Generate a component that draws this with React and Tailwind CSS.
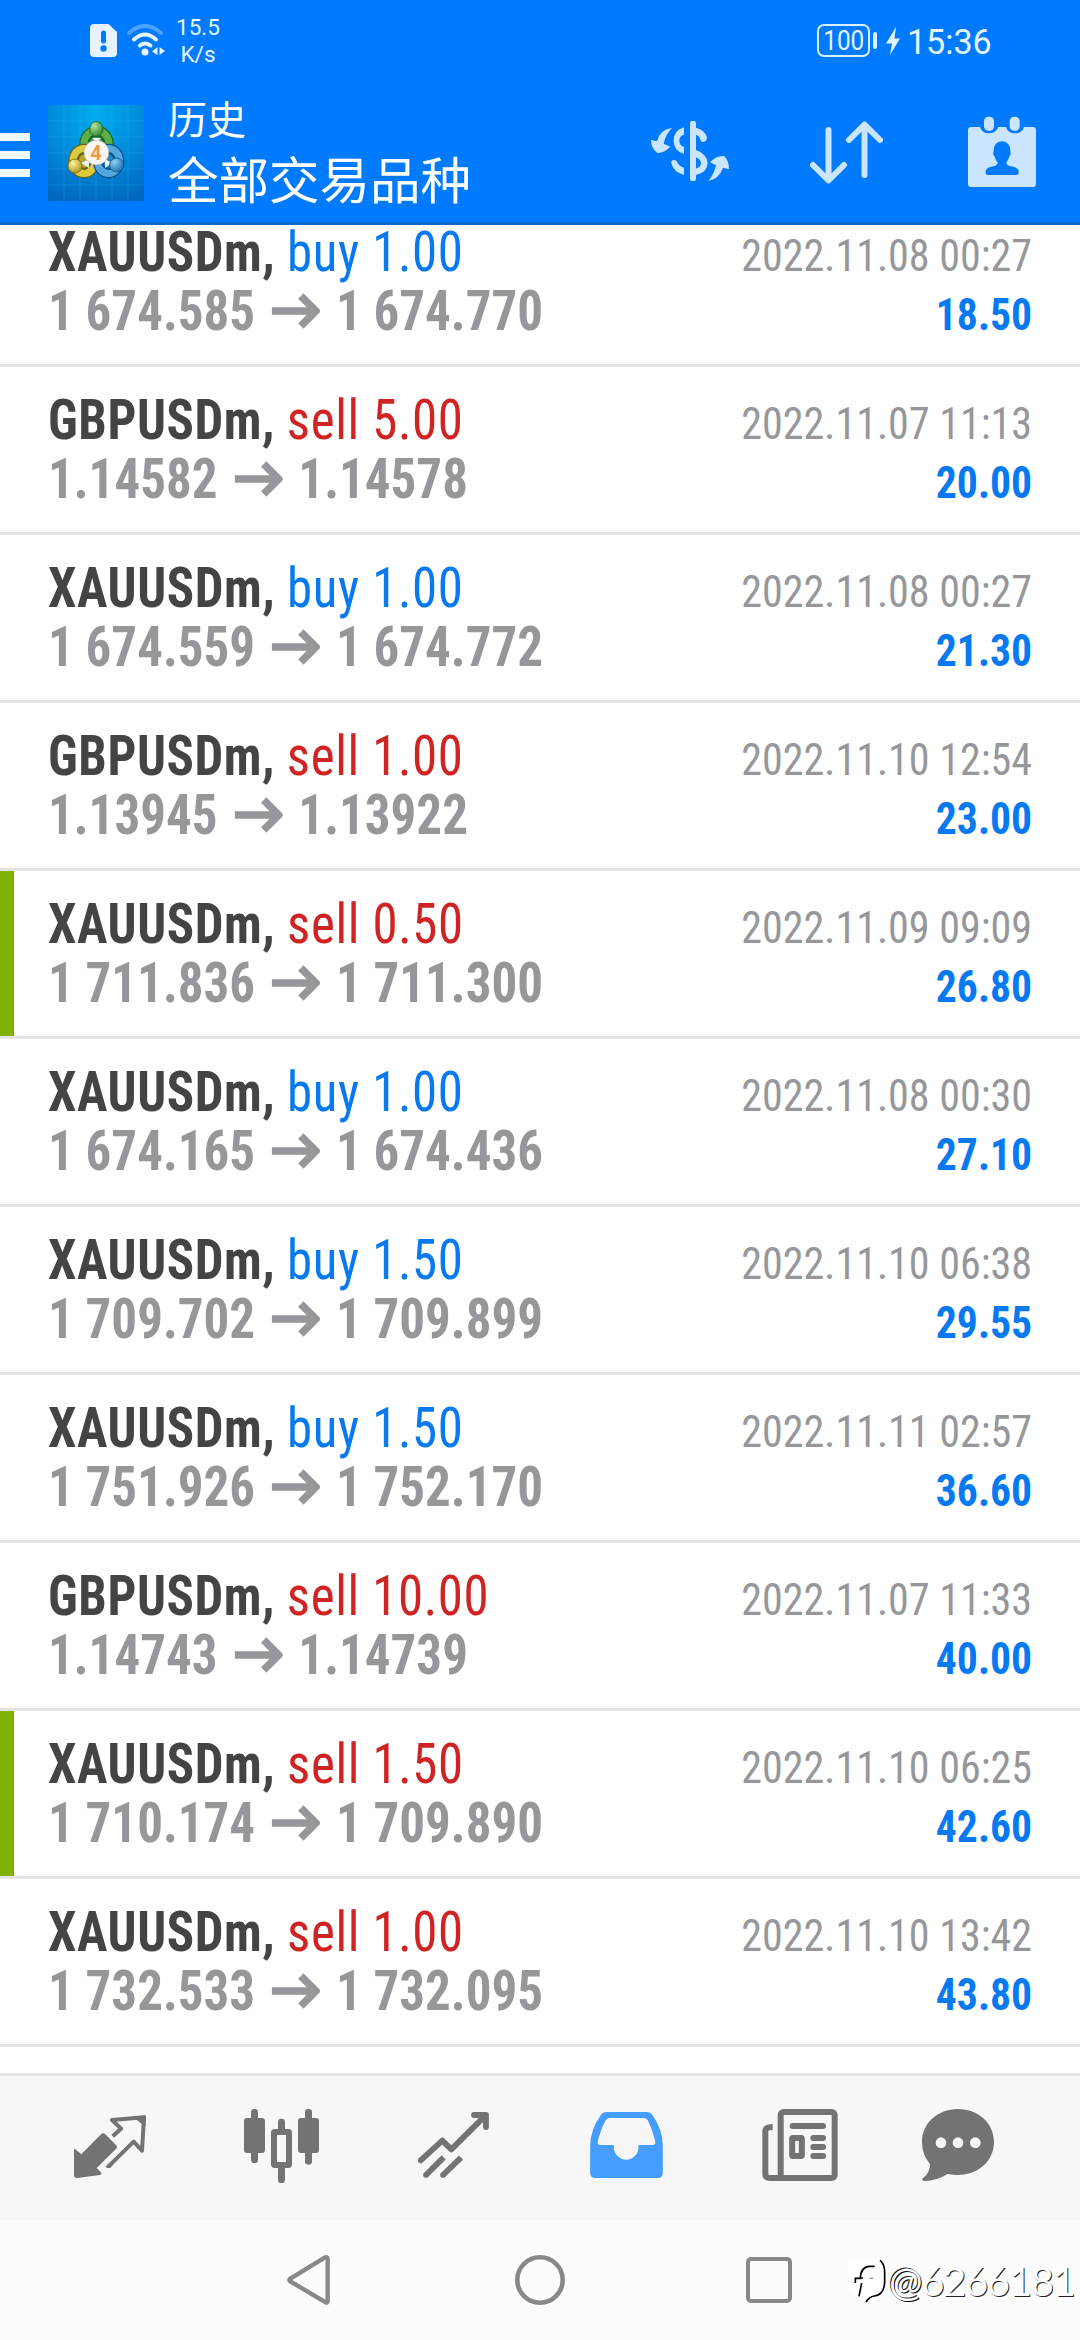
const trades = [
  { symbol: 'XAUUSDm', side: 'buy', volume: '1.00', open: '1 674.585', close: '1 674.770', time: '2022.11.08 00:27', profit: '18.50' },
  { symbol: 'GBPUSDm', side: 'sell', volume: '5.00', open: '1.14582', close: '1.14578', time: '2022.11.07 11:13', profit: '20.00' },
  { symbol: 'XAUUSDm', side: 'buy', volume: '1.00', open: '1 674.559', close: '1 674.772', time: '2022.11.08 00:27', profit: '21.30' },
  { symbol: 'GBPUSDm', side: 'sell', volume: '1.00', open: '1.13945', close: '1.13922', time: '2022.11.10 12:54', profit: '23.00' },
  { symbol: 'XAUUSDm', side: 'sell', volume: '0.50', open: '1 711.836', close: '1 711.300', time: '2022.11.09 09:09', profit: '26.80', marked: true },
  { symbol: 'XAUUSDm', side: 'buy', volume: '1.00', open: '1 674.165', close: '1 674.436', time: '2022.11.08 00:30', profit: '27.10' },
  { symbol: 'XAUUSDm', side: 'buy', volume: '1.50', open: '1 709.702', close: '1 709.899', time: '2022.11.10 06:38', profit: '29.55' },
  { symbol: 'XAUUSDm', side: 'buy', volume: '1.50', open: '1 751.926', close: '1 752.170', time: '2022.11.11 02:57', profit: '36.60' },
  { symbol: 'GBPUSDm', side: 'sell', volume: '10.00', open: '1.14743', close: '1.14739', time: '2022.11.07 11:33', profit: '40.00' },
  { symbol: 'XAUUSDm', side: 'sell', volume: '1.50', open: '1 710.174', close: '1 709.890', time: '2022.11.10 06:25', profit: '42.60', marked: true },
  { symbol: 'XAUUSDm', side: 'sell', volume: '1.00', open: '1 732.533', close: '1 732.095', time: '2022.11.10 13:42', profit: '43.80' },
];

function TradeRow({ trade }) {
  return (
    <div className="flex h-[168px] shrink-0 border-b-[3px] border-[#e4e4e4] [font-stretch:75%]">
      <div className={trade.marked ? 'w-[14px] bg-[#80b000]' : 'w-[14px]'} />
      <div className="flex flex-1 justify-between pt-[28px] pr-[48px] pl-[34px] whitespace-nowrap">
        <div className="w-[560px]">
          <div className="h-[59px] origin-left scale-x-[0.925] text-[55px] leading-[50px] font-bold text-[#444444]">
            <span className="tracking-[0.6px]">{trade.symbol},</span>{' '}
            <span
              className={
                trade.side === 'buy'
                  ? 'font-normal tracking-[0.7px] text-[#077af2]'
                  : 'font-normal tracking-[0.7px] text-[#d02424]'
              }
            >
              {trade.side} {trade.volume}
            </span>
          </div>
          <div className="h-[59px] origin-left scale-x-[0.928] text-[55px] leading-[50px] font-bold text-[#96979b]">
            {trade.open}
            <svg className="mr-[17px] ml-[18px] inline-block h-[36px] w-[52px] align-[1px]" viewBox="0 0 48 36" preserveAspectRatio="none">
              <path d="M0 18H43M29 3L44 18L29 33" fill="none" stroke="#96979b" strokeWidth="7.5" />
            </svg>
            {trade.close}
          </div>
        </div>
        <div className="flex flex-col items-end">
          <div className="h-[59px] origin-right scale-x-[0.935] pt-[4px] text-[45px] leading-[50px] text-[#96979b]">{trade.time}</div>
          <div className="h-[59px] origin-right scale-x-[0.925] pt-[4px] text-[45px] leading-[50px] font-bold text-[#077af2]">{trade.profit}</div>
        </div>
      </div>
    </div>
  );
}

function AppLogo() {
  return (
    <svg className="ml-[18px] h-[96px] w-[96px]" viewBox="0 0 96 96">
      <defs>
        <radialGradient id="sky" cx="0.5" cy="0.1" r="0.95">
          <stop offset="0" stopColor="#00adee" />
          <stop offset="0.5" stopColor="#008bdc" />
          <stop offset="1" stopColor="#0068be" />
        </radialGradient>
        <radialGradient id="green" cx="0.35" cy="0.3" r="0.8">
          <stop offset="0" stopColor="#b9e3a0" />
          <stop offset="1" stopColor="#1f7d24" />
        </radialGradient>
        <radialGradient id="gold" cx="0.35" cy="0.3" r="0.8">
          <stop offset="0" stopColor="#fff39a" />
          <stop offset="1" stopColor="#a98f12" />
        </radialGradient>
        <radialGradient id="azure" cx="0.35" cy="0.3" r="0.8">
          <stop offset="0" stopColor="#8fd2f5" />
          <stop offset="1" stopColor="#1268ac" />
        </radialGradient>
      </defs>
      <rect width="96" height="96" fill="url(#sky)" />
      <path d="M16 0V96M32 0V96M48 0V96M64 0V96M80 0V96M0 16H96M0 32H96M0 48H96M0 64H96M0 80H96" stroke="#3fb2ee" strokeWidth="0.8" opacity="0.35" />
      <ellipse cx="48.500" cy="39" rx="12" ry="13" fill="#3f9440" stroke="#17642c" strokeWidth="10.500" />
      <ellipse cx="48.500" cy="39" rx="12.500" ry="13.500" fill="none" stroke="#5cae4b" strokeWidth="7" />
      <ellipse cx="36" cy="56" rx="10.500" ry="12" fill="#b7a528" stroke="#6a6414" strokeWidth="10.500" />
      <ellipse cx="36" cy="56" rx="11" ry="12.500" fill="none" stroke="#ddca3f" strokeWidth="7" />
      <ellipse cx="60.500" cy="56" rx="10.500" ry="12" fill="#2b86c4" stroke="#0c4f8c" strokeWidth="10.500" />
      <ellipse cx="60.500" cy="56" rx="11" ry="12.500" fill="none" stroke="#50a9de" strokeWidth="7" />
      <path d="M33 58l8-4v9zM64 58l-7-4v9zM44 33h9l-4 5z" fill="#eef6f8" />
      <ellipse cx="48.300" cy="24" rx="6.700" ry="7.500" fill="url(#green)" stroke="#1b6b26" strokeWidth="0.8" />
      <ellipse cx="27" cy="61" rx="7" ry="7" fill="url(#gold)" stroke="#7a6a10" strokeWidth="0.8" />
      <ellipse cx="68.500" cy="60" rx="7" ry="7" fill="url(#azure)" stroke="#0f5594" strokeWidth="0.8" />
      <circle cx="48.400" cy="47.500" r="12.300" fill="#f8f6f3" stroke="#b9b9b0" strokeWidth="0.6" />
      <text x="48" y="55" textAnchor="middle" fontFamily="Roboto, sans-serif" fontWeight="700" fontSize="20" fill="#f19a4b">4</text>
    </svg>
  );
}

function StatusBar() {
  return (
    <div className="flex h-[82px] items-start pl-[90px] text-[#e6f5ff]">
      <svg className="mt-[24px] h-[33px] w-[27px]" viewBox="0 0 27 33">
        <path d="M4 0H18.500L27 8V29Q27 33 23 33H4Q0 33 0 29V4Q0 0 4 0Z" fill="#e6f3ff" />
        <path d="M13.500 9V17" stroke="#007aff" strokeWidth="5" strokeLinecap="round" />
        <circle cx="13.500" cy="24.500" r="3.200" fill="#007aff" />
      </svg>
      <svg className="mt-[24px] ml-[10px] h-[32px] w-[39px]" viewBox="0 0 39 32" fill="none" strokeWidth="4">
        <path d="M2 9Q18 -5 34 9" stroke="#4ca2ff" strokeLinecap="round" />
        <path d="M7 15.500Q18 5.500 29 15.500" stroke="#e6f5ff" strokeLinecap="round" />
        <path d="M13 21.500Q18 17.500 23.500 21.500" stroke="#e6f5ff" strokeLinecap="round" />
        <circle cx="18" cy="28" r="3.500" fill="#e6f5ff" />
        <path d="M30.500 23V31L25 27.500ZM32.500 23V31L38 27Z" fill="#e6f5ff" />
      </svg>
      <div className="mt-[14px] ml-[8px] w-[48px] text-center text-[22.500px] leading-[27px]">
        15.5
        <br />
        K/s
      </div>
      <div className="mt-[24px] ml-[595px] flex h-[33px] w-[53px] items-center justify-center rounded-[7px] border-[2.500px] border-[#d9f1ff]">
        <span className="scale-x-[0.9] text-[27px] leading-[28px]">100</span>
      </div>
      <div className="mt-[32px] ml-[3px] h-[17px] w-[4px] rounded-full bg-[#d9f1ff]" />
      <svg className="mt-[27px] ml-[9px] h-[28px] w-[14px]" viewBox="0 0 14 28">
        <path d="M10 0L0 16.500H6L4 28L14 11.500H8.500Z" fill="#e0f5ff" />
      </svg>
      <div className="mt-[22px] ml-[7px] origin-left scale-x-[0.985] text-[34.500px] leading-[40px]">15:36</div>
    </div>
  );
}

function Toolbar() {
  return (
    <div className="flex h-[140px] items-start">
      <div className="mt-[51px] flex w-[30px] flex-col gap-[10px]">
        <div className="h-[8px] bg-[#f0faff]" />
        <div className="h-[8px] bg-[#f0faff]" />
        <div className="h-[8px] bg-[#f0faff]" />
      </div>
      <div className="mt-[23px]">
        <AppLogo />
      </div>
      <div className="mt-[15px] ml-[24px] w-[483px] font-['Roboto','Noto_Sans_CJK_SC',sans-serif] text-white">
        <div className="text-[39px] leading-[48px]">历史</div>
        <div className="pt-[2px] text-[50.500px] leading-[70px]">全部交易品种</div>
      </div>
      <svg className="mt-[39px] h-[60px] w-[78px]" viewBox="153 363 234 180" fill="#cce5ff">
        <path d="M216 384Q180 388 171 424L153 420Q153 445 172 459Q192 459 211 440L191 431Q196 404 216 384Z" />
        <path d="M325 543Q358 536 369 503L387 508Q387 482 372 468Q350 466 330 487L348 496Q342 523 325 543Z" />
        <path d="M279 371V535" stroke="#cce5ff" strokeWidth="18" strokeLinecap="round" />
        <path d="M252 382V404Q238 407 238 422Q238 436 252 441V462Q221 452 221 422Q221 391 252 382Z" />
        <path d="M214 484Q220 477 229 482Q236 498 252 503V525Q220 516 214 490Z" />
        <path d="M288 383Q315 390 321 412Q320 426 309 426Q302 426 298 412Q294 405 286 404Z" />
        <path d="M286 449Q323 462 323 490Q322 518 286 526V506Q303 502 303 490Q303 478 286 471Z" />
      </svg>
      <svg className="mt-[39px] ml-[81px] h-[63px] w-[73px]" viewBox="0 0 73 63" fill="none" stroke="#cce5ff" strokeWidth="6" strokeLinecap="round" strokeLinejoin="round">
        <path d="M18.500 9V59M3 44L18.500 59.500L34 44" />
        <path d="M54.500 54V4M39 19L54.500 3.500L70 19" />
      </svg>
      <svg className="mt-[34px] ml-[85px] h-[72px] w-[68px]" viewBox="1104 348 204 216">
        <path d="M1113 381H1140Q1146 400 1167 400Q1188 400 1194 381H1218Q1224 400 1245 400Q1266 400 1272 381H1298Q1308 381 1308 391V551Q1308 561 1298 561H1114Q1104 561 1104 551V390Q1104 381 1113 381Z" fill="#cce5ff" />
        <rect x="1152" y="350" width="30" height="42" rx="13" fill="#cce5ff" />
        <rect x="1229" y="350" width="30" height="42" rx="13" fill="#cce5ff" />
        <path d="M1206 424Q1232 426 1231 455Q1234 462 1228 470Q1224 482 1219 487Q1219 495 1228 498Q1254 502 1256 512V519Q1256 525 1249 525H1164Q1157 525 1157 519V512Q1160 502 1184 498Q1193 495 1193 487Q1187 482 1184 470Q1177 462 1181 455Q1180 426 1206 424Z" fill="#007aff" />
      </svg>
    </div>
  );
}

function TabBar() {
  return (
    <div className="flex h-[147px] shrink-0 items-start border-t-[3px] border-[#e4e4e4] bg-[#f7f7f7] pt-[33px] pl-[74px]">
      <svg className="mt-[6px] h-[64px] w-[72px]" viewBox="222 224 216 192">
        <path d="M222 327Q225 325 229 329L244 342L303 282Q309 276 316 282L348 314Q354 320 348 326L290 383L303 396Q307 402 300 404L231 413Q222 413 222 405Z" fill="#737373" />
        <path d="M338 288L363 265L336 239L432 231L426 331L401 304L325 379" fill="none" stroke="#737373" strokeWidth="12" strokeLinejoin="round" />
        <path d="M316 380L326 370L340 372L331 382Q324 384 316 380ZM400 230L438 225L436 260Z" fill="#737373" />
      </svg>
      <svg className="ml-[98px] h-[74px] w-[75px]" viewBox="732 207 225 222" fill="#737373">
        <rect x="753" y="207" width="21" height="162" rx="10" />
        <rect x="732" y="234" width="63" height="105" rx="9" />
        <rect x="834" y="236" width="21" height="40" rx="10" />
        <rect x="834" y="374" width="21" height="55" rx="10" />
        <rect x="822" y="276" width="45" height="99" rx="2" fill="none" stroke="#737373" strokeWidth="18" strokeLinejoin="round" />
        <rect x="915" y="207" width="21" height="167" rx="10" />
        <rect x="894" y="234" width="63" height="105" rx="9" />
      </svg>
      <svg className="mt-[3px] ml-[99px] h-[66px] w-[71px]" viewBox="174 216 213 198" fill="none" stroke="#737373" strokeWidth="17.500">
        <path d="M182 361L247 302L274 328L376 227M342 225H378V261" strokeLinecap="round" strokeLinejoin="round" />
        <path d="M198 405L251 352M249 405L303 353" />
        <circle cx="198" cy="405" r="8.500" fill="#737373" stroke="none" />
        <circle cx="249" cy="405" r="8.500" fill="#737373" stroke="none" />
      </svg>
      <svg className="mt-[3px] ml-[101px] h-[66px] w-[73px]" viewBox="691 216 218 198">
        <path fillRule="evenodd" d="M741 216H862Q872 216 878 225Q909 270 909 318V398Q909 414 893 414H707Q691 414 691 398V318Q691 270 723 225Q729 216 741 216ZM751 234Q740 234 736 243Q722 270 714 302Q711 315 722 315H762V322A37 37 0 0 0 836 322V315H877Q889 315 886 302Q878 270 865 243Q861 234 850 234Z" fill="#459dff" />
      </svg>
      <svg className="ml-[99px] h-[72px] w-[76px]" viewBox="126 207 228 216" fill="none" stroke="#737373" strokeWidth="18">
        <rect x="182" y="216" width="162" height="198" rx="9" />
        <path d="M158 261Q136 261 136 274V402Q136 414 150 414H190" />
        <path d="M218 258H309M280 294H309M280 321H309M280 348H309" strokeLinecap="round" />
        <rect x="216.500" y="294" width="29" height="54" rx="2" strokeLinejoin="round" />
      </svg>
      <svg className="ml-[84px] h-[72px] w-[72px]" viewBox="606 207 216 216">
        <path d="M714 207C775 207 822 250 822 306C822 362 775 405 714 405Q697 405 683 402Q650 423 612 423Q603 421 609 415Q630 398 630 372Q606 345 606 306C606 250 653 207 714 207Z" fill="#737373" />
        <circle cx="663" cy="308" r="16" fill="#f7f7f7" />
        <circle cx="714" cy="308" r="16" fill="#f7f7f7" />
        <circle cx="766" cy="308" r="16" fill="#f7f7f7" />
      </svg>
    </div>
  );
}

function NavigationBar() {
  return (
    <div className="flex h-[120px] shrink-0 items-center bg-[#fcfcfc] pl-[287px]">
      <svg className="h-[50px] w-[43px]" viewBox="861 645 129 150" fill="none" stroke="#888888" strokeWidth="13" strokeLinejoin="round">
        <path d="M980 652Q983 653 983 657V783Q983 789 977 787L871 724Q865 720 871 716L974 653Q977 651 980 652Z" />
      </svg>
      <svg className="ml-[185px] h-[50px] w-[50px]" viewBox="0 0 50 50">
        <circle cx="25" cy="25" r="22.700" fill="none" stroke="#888888" strokeWidth="4.500" />
      </svg>
      <div className="ml-[181px] h-[46px] w-[46px] rounded-[5px] border-[4.500px] border-[#888888]" />
      <div className="ml-[55px] flex items-center">
        <svg className="mt-[2px] h-[46px] w-[42px]" viewBox="380 662 126 138" fill="none" stroke="#000000">
          <path d="M398 668H478Q496 680 496 720Q496 776 455 780Q384 780 382 740Q378 680 398 668Z" fill="#ffffff" stroke="none" />
          <path d="M405 737V723H420Q421 689 447 687H463M428 722H420M424 737L416 777" strokeWidth="5" />
          <path d="M479 669Q493 680 493 705V735Q491 773 462 776Q447 778 437 794" strokeWidth="5" />
          <path d="M447 723H459" strokeWidth="4" stroke="#999999" />
        </svg>
        <div className="mt-[2px] font-['Lato',sans-serif] text-[40px] leading-[48px] tracking-[-1.3px] text-white [text-shadow:1px_1px_0_#222222]">
          <span className="[text-shadow:1px_1px_0_#000000,-1px_-1px_0_#222222]">@</span>6266181
        </div>
      </div>
    </div>
  );
}

export default function App() {
  return (
    <div className="flex h-[2340px] w-[1080px] flex-col overflow-hidden bg-white font-['Roboto',sans-serif]">
      <header className="h-[225px] shrink-0 overflow-hidden border-b-[3px] border-[#1268cc] bg-[#007aff]">
        <StatusBar />
        <Toolbar />
      </header>
      <main className="flex h-[1848px] shrink-0 flex-col justify-end overflow-hidden pb-[26px]">
        {trades.map((trade, i) => (
          <TradeRow key={i} trade={trade} />
        ))}
      </main>
      <TabBar />
      <NavigationBar />
    </div>
  );
}
